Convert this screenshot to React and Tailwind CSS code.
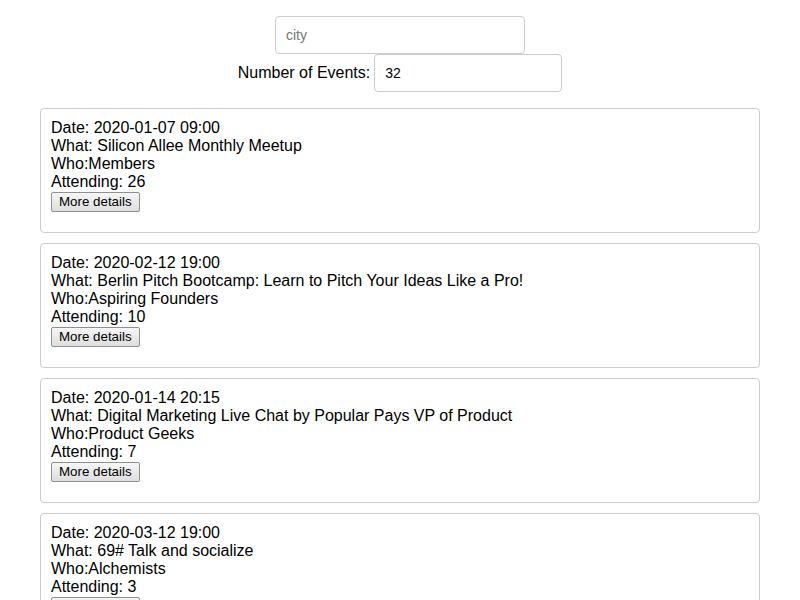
import React from "react";

const events = [
  { date: "2020-01-07 09:00", what: "Silicon Allee Monthly Meetup", who: "Members", attending: 26 },
  { date: "2020-02-12 19:00", what: "Berlin Pitch Bootcamp: Learn to Pitch Your Ideas Like a Pro!", who: "Aspiring Founders", attending: 10 },
  { date: "2020-01-14 20:15", what: "Digital Marketing Live Chat by Popular Pays VP of Product", who: "Product Geeks", attending: 7 },
  { date: "2020-03-12 19:00", what: "69# Talk and socialize", who: "Alchemists", attending: 3 },
];

export default function App() {
  return (
    <div className="min-h-[600px] bg-white text-black font-['Liberation_Sans',Arial,sans-serif]">
      <div className="flex flex-col items-center pt-4">
        <input
          placeholder="city"
          className="w-[250px] h-[38px] border border-[#ccc] rounded-[4px] px-[10px] text-[14px] text-black placeholder:text-[#757575] outline-none"
        />
        <div className="flex items-center">
          <span className="text-[16px] mr-[4px]">Number of Events:</span>
          <input
            defaultValue="32"
            className="w-[188px] h-[38px] border border-[#ccc] rounded-[4px] px-[10px] text-[14px] text-black outline-none"
          />
        </div>
      </div>
      <div className="flex flex-col gap-[10px] mx-[40px] mt-[16px]">
        {events.map((e, i) => (
          <div key={i} className="border border-[#ccc] rounded-[4px] pt-[10px] px-[10px] pb-[20px] text-[16px] leading-[18px]">
            <div>Date: {e.date}</div>
            <div>What: {e.what}</div>
            <div>Who:{e.who}</div>
            <div>Attending: {e.attending}</div>
            <button className="mt-[1px] h-[20px] px-[7px] text-[13.33px] leading-[16px] border border-[#8f8f8f] rounded-[2px] bg-gradient-to-b from-[#f6f6f6] to-[#dedede]">
              More details
            </button>
          </div>
        ))}
      </div>
    </div>
  );
}
